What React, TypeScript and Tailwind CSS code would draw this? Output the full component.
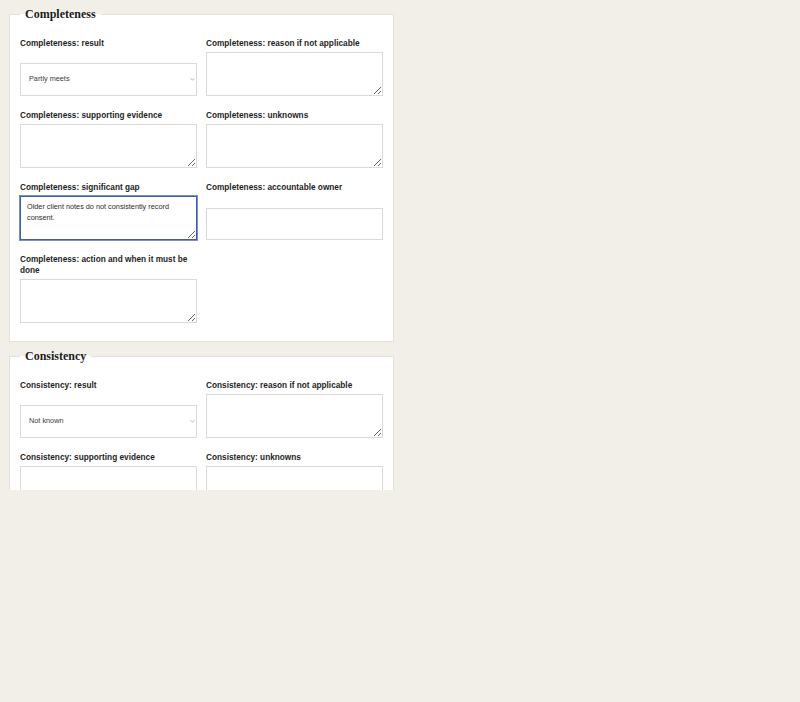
import { useEffect, useRef } from "react"

type Field = {
    label: string
    kind: "select" | "textarea" | "input"
    value?: string
    focused?: boolean
}

const completeness: Field[] = [
    { label: "Completeness: result", kind: "select", value: "Partly meets" },
    { label: "Completeness: reason if not applicable", kind: "textarea" },
    { label: "Completeness: supporting evidence", kind: "textarea" },
    { label: "Completeness: unknowns", kind: "textarea" },
    {
        label: "Completeness: significant gap",
        kind: "textarea",
        value: "Older client notes do not consistently record consent.",
        focused: true,
    },
    { label: "Completeness: accountable owner", kind: "input" },
    { label: "Completeness: action and when it must be done", kind: "textarea" },
]

// only the part of this section that is in view
const consistency: Field[] = [
    { label: "Consistency: result", kind: "select", value: "Not known" },
    { label: "Consistency: reason if not applicable", kind: "textarea" },
    { label: "Consistency: supporting evidence", kind: "textarea" },
    { label: "Consistency: unknowns", kind: "textarea" },
]

function Control({ field }: { field: Field }) {
    const ref = useRef<HTMLTextAreaElement>(null)

    useEffect(() => {
        if (field.focused && ref.current) {
            const el = ref.current
            el.focus()
            el.setSelectionRange(el.value.length, el.value.length)
        }
    }, [field.focused])

    if (field.kind === "select") {
        return (
            <div className="relative">
                <select
                    defaultValue={field.value}
                    className="h-[33px] w-full appearance-none border border-[#dcdad6] bg-white pl-[8px] text-[7.3px] text-[#3a3a3a] focus:outline-none"
                >
                    <option>Meets</option>
                    <option>Partly meets</option>
                    <option>Does not meet</option>
                    <option>Not known</option>
                    <option>Not applicable</option>
                </select>
                {/* small chevron like the native one */}
                <svg
                    viewBox="0 0 6 4"
                    className="pointer-events-none absolute right-[2px] top-[15px] h-[3px] w-[5px]"
                    fill="none"
                    stroke="#8a8a8a"
                    strokeWidth="0.9"
                >
                    <path d="M0.5 0.5 L3 3 L5.5 0.5" />
                </svg>
            </div>
        )
    }

    if (field.kind === "input") {
        return <input type="text" className="h-[32px] w-full border border-[#dcdad6] bg-white px-[6px] text-[7.3px] focus:outline-none" />
    }

    return (
        <textarea
            ref={ref}
            defaultValue={field.value}
            className={
                field.focused
                    ? "block h-[44px] w-full border border-[#3d5ea6] bg-white px-[6px] py-[4px] text-[7.3px] leading-[11px] text-[#2a2a2a] shadow-[0_0_0_1px_#3d5ea6b0] outline-none"
                    : "block h-[44px] w-full border border-[#dcdad6] bg-white px-[6px] py-[4px] text-[7.3px] leading-[11px] text-[#2a2a2a] focus:outline-none"
            }
        />
    )
}

function Section({ title, fields }: { title: string; fields: Field[] }) {
    return (
        <fieldset className="mx-[9px] border border-[#e4e1da] bg-white px-[10px] pb-[18px] pt-[17px]">
            <legend className="px-[5px] font-['Liberation_Serif',Georgia,serif] text-[12px] font-bold leading-[14px] text-[#1c1c1c]">
                {title}
            </legend>
            <div className="grid grid-cols-2 gap-x-[9px] gap-y-[14px]">
                {fields.map((field) => (
                    <div key={field.label} className="flex flex-col justify-between">
                        <label className="mb-[3px] text-[8.25px] font-bold leading-[11px] text-[#1e1e1e]">{field.label}</label>
                        <Control field={field} />
                    </div>
                ))}
            </div>
        </fieldset>
    )
}

export default function App() {
    return (
        <div className="min-h-[702px] w-full bg-[#f2efe9] font-['Liberation_Sans',Arial,sans-serif]">
            <div className="flex h-[490px] w-[403px] flex-col gap-[7px] overflow-hidden pt-[7px]">
                <Section title="Completeness" fields={completeness} />
                <Section title="Consistency" fields={consistency} />
            </div>
        </div>
    )
}
